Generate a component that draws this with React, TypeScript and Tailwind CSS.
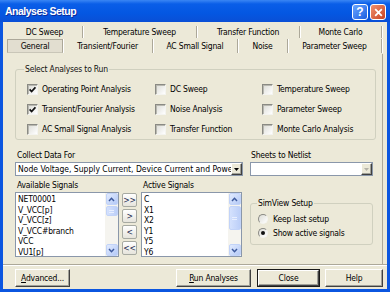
import React from "react";

// XP-style "Analyses Setup" dialog, shrunk the way the screenshot is

const row1 = [
  { label: "DC Sweep", w: "w-[76px]" },
  { label: "Temperature Sweep", w: "w-[114px]" },
  { label: "Transfer Function", w: "w-[103px]" },
  { label: "Monte Carlo", w: "w-[82px]" },
];

const row2 = [
  { label: "General", w: "w-[56px]", active: true },
  { label: "Transient/Fourier", w: "w-[90px]" },
  { label: "AC Small Signal", w: "w-[85px]" },
  { label: "Noise", w: "w-[50px]" },
  { label: "Parameter Sweep", w: "w-[94px]" },
];

const analyses = [
  ["Operating Point Analysis", true],
  ["DC Sweep", false],
  ["Temperature Sweep", false],
  ["Transient/Fourier Analysis", true],
  ["Noise Analysis", false],
  ["Parameter Sweep", false],
  ["AC Small Signal Analysis", false],
  ["Transfer Function", false],
  ["Monte Carlo Analysis", false],
] as const;

const available = ["NET00001", "V_VCC[p]", "V_VCC[z]", "V_VCC#branch", "VCC", "VU1[p]"];
const active = ["C", "X1", "X2", "Y1", "Y5", "Y6"];

const Checkbox = ({ checked, label }: { checked: boolean; label: string }) => (
  <div className="flex items-center gap-[4px]">
    <span className="flex h-[11px] w-[11px] items-center justify-center border border-[#8a8a84] border-b-[#f4f4f0] border-r-[#f4f4f0] bg-gradient-to-br from-[#dcdcd6] to-white shadow-[inset_1px_1px_0_#b8b8b0]">
      {checked && (
        <svg width="7" height="7" viewBox="0 0 7 7">
          <path d="M0.6 3.4 L2.6 5.5 L6.4 1.3" fill="none" stroke="#111" strokeWidth="1.7" />
        </svg>
      )}
    </span>
    <span>{label}</span>
  </div>
);

const Radio = ({ checked, label }: { checked: boolean; label: string }) => (
  <div className="flex h-[14px] items-center gap-[5px]">
    <span className="flex h-[10px] w-[10px] items-center justify-center rounded-full border border-[#8a8a84] border-b-[#f4f4f0] border-r-[#f4f4f0] bg-gradient-to-br from-[#dcdcd6] to-white">
      {checked && <span className="h-[4px] w-[4px] rounded-full bg-[#111]" />}
    </span>
    <span>{label}</span>
  </div>
);

const ComboArrow = ({ disabled }: { disabled?: boolean }) => (
  <span className="flex h-full w-[11px] shrink-0 items-center justify-center border border-t-white border-l-white border-r-[#404040] border-b-[#404040] bg-[#ece9d8] shadow-[inset_-1px_-1px_0_#a0a098]">
    <svg width="5" height="3" viewBox="0 0 5 3">
      <path d="M0 0 H5 L2.5 3 Z" fill={disabled ? "#b4b2a8" : "#000"} />
    </svg>
  </span>
);

const ScrollBtn = ({ up }: { up?: boolean }) => (
  <span className="flex h-[12px] w-[12px] items-center justify-center rounded-[2px] border border-[#c2d3f8] bg-gradient-to-br from-[#e2ebfe] to-[#b4c9f6]">
    <svg width="7" height="5" viewBox="0 0 7 5">
      <path d={up ? "M1 4 L3.5 1.3 L6 4" : "M1 1 L3.5 3.7 L6 1"} fill="none" stroke="#3d5a9e" strokeWidth="1.5" />
    </svg>
  </span>
);

const ListBox = ({ items, w, thumb }: { items: string[]; w: string; thumb: string }) => (
  <div className={`flex h-[65px] ${w} border border-[#8a97aa] bg-white`}>
    <div className="flex-1 overflow-hidden pl-[2px] pt-[1px] leading-[10.5px]">
      {items.map((s) => (
        <div key={s} className="whitespace-nowrap">
          {s}
        </div>
      ))}
    </div>
    <div className="flex w-[13px] flex-col items-center bg-[#f5f4ef]">
      <ScrollBtn up />
      <div className="w-full flex-1 px-[0.5px] pt-[1px]">
        <div className={`${thumb} flex w-full flex-col items-center justify-center gap-[1px] rounded-[2px] border border-[#c2d3f8] bg-gradient-to-r from-[#d4e1fd] to-[#bccff8]`}>
          <span className="h-px w-[5px] bg-[#e8efff]" />
          <span className="h-px w-[5px] bg-[#e8efff]" />
        </div>
      </div>
      <ScrollBtn />
    </div>
  </div>
);

const MoveBtn = ({ label }: { label: string }) => (
  <div className="flex h-[14px] w-[15px] items-center justify-center rounded-[2px] border border-[#a7aaa2] bg-gradient-to-b from-white to-[#e6e4dc] text-[#1a2a50]">
    {label}
  </div>
);

const Button = ({ w, ml, children, def }: { w: string; ml: string; children: React.ReactNode; def?: boolean }) => (
  <div className={`${w} ${ml} h-[18px] ${def ? "border border-[#1a1a1a]" : ""}`}>
    <div className="flex h-full items-center justify-center border border-t-white border-l-white border-r-[#404040] border-b-[#404040] bg-[#ece9d8] shadow-[inset_-1px_-1px_0_#a0a098]">
      {children}
    </div>
  </div>
);

export default function App() {
  return (
    <div className="h-[292px] w-[390px] overflow-hidden bg-[#0b56e0] font-['DejaVu_Sans_Condensed',sans-serif] text-[8.5px] tracking-[-0.2px] text-black">
      {/* title bar */}
      <div className="flex h-[22px] items-center justify-between bg-[linear-gradient(to_bottom,#3a86f4_0%,#0a5ee8_18%,#0457e2_60%,#0a4fd6_100%)] pl-[5px] pr-[4px] pt-[2px]">
        <span className="font-['Liberation_Sans',sans-serif] text-[10.5px] font-bold tracking-[-0.5px] text-white [text-shadow:1px_1px_0_#0a2a9c]">
          Analyses Setup
        </span>
        <div className="flex gap-[2px]">
          <span className="flex h-[16px] w-[16px] items-center justify-center rounded-[3px] border border-white bg-gradient-to-br from-[#6aa6ff] to-[#1b5ce0] font-['Liberation_Sans',sans-serif] text-[12px] font-bold leading-none tracking-normal text-white">
            ?
          </span>
          <span className="flex h-[16px] w-[16px] items-center justify-center rounded-[3px] border border-white bg-gradient-to-br from-[#f0906e] to-[#c8401e]">
            <svg width="9" height="9" viewBox="0 0 9 9">
              <path d="M1.2 1.2 L7.8 7.8 M7.8 1.2 L1.2 7.8" stroke="#fff" strokeWidth="1.8" />
            </svg>
          </span>
        </div>
      </div>

      {/* body */}
      <div className="mx-[3px] flex h-[267px] flex-col bg-[#ece9d8]">
        {/* tabs */}
        <div className="pl-[4px] pt-[3px]">
          <div className="flex h-[13px] pt-[1px]">
            {row1.map((t) => (
              <div key={t.label} className={`${t.w} flex items-center justify-center border-r border-[#aca899] shadow-[1px_0_0_#fff]`}>
                {t.label}
              </div>
            ))}
          </div>
          <div className="mt-[1px] flex h-[14px]">
            {row2.map((t) => (
              <div
                key={t.label}
                className={`${t.w} flex items-center justify-center border-r border-[#aca899] shadow-[1px_0_0_#fff] ${
                  t.active ? "border border-[#8d8b80] border-b-[#c9c6b8] bg-[#e2ded0]" : ""
                }`}
              >
                {t.label}
              </div>
            ))}
          </div>
        </div>

        {/* tab page */}
        <div className="ml-[4px] mt-[1px] h-[210px] w-[376px] border-r border-[#aca899]">
          <fieldset className="ml-[8px] mt-[9px] w-[361px] rounded-[3px] border border-[#d0d0bf] p-0">
            <legend className="ml-[8px] px-[1px] leading-[12px] text-[#111]">Select Analyses to Run</legend>
            <div className="grid auto-rows-[20px] grid-cols-[128px_107px_1fr] items-center pl-[11px] pt-[4px]">
              {analyses.map(([label, checked]) => (
                <Checkbox key={label} label={label} checked={checked} />
              ))}
            </div>
          </fieldset>

          <div className="mt-[9px] flex">
            <div className="ml-[8px] w-[228px]">
              <div className="h-[12px] pl-[2px] leading-[12px]">Collect Data For</div>
              <div className="mt-[1px] flex h-[14px] items-center border border-[#8a97aa] bg-white">
                <span className="min-w-0 flex-1 overflow-hidden whitespace-nowrap pl-[2px] tracking-normal">
                  Node Voltage, Supply Current, Device Current and Power
                </span>
                <ComboArrow />
              </div>
              <div className="mt-[3px] flex h-[12px] leading-[12px]">
                <span className="w-[126px] pl-[2px]">Available Signals</span>
                <span className="pl-[2px]">Active Signals</span>
              </div>
              <div className="mt-[1px] flex items-start">
                <ListBox items={available} w="w-[104px]" thumb="h-[10px]" />
                <div className="ml-[3px] mt-[1px] flex flex-col gap-[2px]">
                  <MoveBtn label=">>" />
                  <MoveBtn label=">" />
                  <MoveBtn label="<" />
                  <MoveBtn label="<<" />
                </div>
                <div className="ml-[4px]">
                  <ListBox items={active} w="w-[101px]" thumb="h-[24px]" />
                </div>
              </div>
            </div>

            <div className="ml-[7px] w-[123px]">
              <div className="h-[12px] pl-[1px] leading-[12px]">Sheets to Netlist</div>
              <div className="mt-[1px] flex h-[14px] items-center justify-end border border-[#8a97aa] bg-white">
                <ComboArrow disabled />
              </div>
              <fieldset className="mt-[21px] rounded-[3px] border border-[#d0d0bf] p-0">
                <legend className="ml-[6px] px-[1px] leading-[12px]">SimView Setup</legend>
                <div className="pb-[4px] pl-[7px] pt-[3px]">
                  <Radio checked={false} label="Keep last setup" />
                  <Radio checked label="Show active signals" />
                </div>
              </fieldset>
            </div>
          </div>
        </div>

        <div className="h-[2px] border-t border-[#aca899] bg-white" />

        <div className="mt-[3px] flex pl-[12px]">
          <Button w="w-[55px]" ml="ml-0">
            <span>
              <u>A</u>dvanced...
            </span>
          </Button>
          <Button w="w-[75px]" ml="ml-[106px]">
            <span>
              <u>R</u>un Analyses
            </span>
          </Button>
          <Button w="w-[63px]" ml="ml-[6px]" def>
            Close
          </Button>
          <Button w="w-[58px]" ml="ml-[5px]">
            Help
          </Button>
        </div>
      </div>
    </div>
  );
}
